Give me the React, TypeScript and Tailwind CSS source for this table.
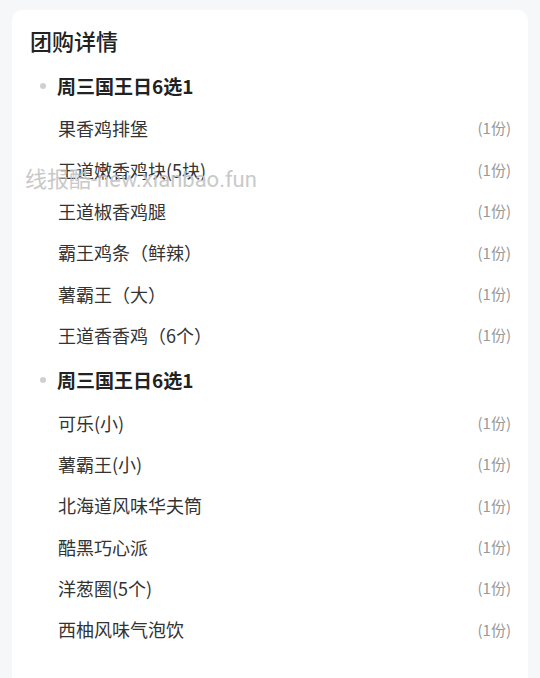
import React from "react";

const groups = [
  {
    title: "周三国王日6选1",
    items: ["果香鸡排堡", "王道嫩香鸡块(5块)", "王道椒香鸡腿", "霸王鸡条（鲜辣）", "薯霸王（大）", "王道香香鸡（6个）"],
  },
  {
    title: "周三国王日6选1",
    items: ["可乐(小)", "薯霸王(小)", "北海道风味华夫筒", "酷黑巧心派", "洋葱圈(5个)", "西柚风味气泡饮"],
  },
];

export default function App() {
  return (
    <div
      className="relative h-[678px] w-[540px] overflow-hidden bg-[#f6f7f9] px-3 pt-[10px]"
      style={{ fontFamily: '"Noto Sans CJK SC", "Noto Sans", sans-serif' }}
    >
      <div className="h-[700px] rounded-[10px] bg-white pl-[18px] pr-[17px] pt-[14px]">
        <div className="text-[22px] font-medium leading-[32px] text-[#222]">团购详情</div>
        {groups.map((g, gi) => (
          <div key={gi} className={gi === 0 ? "mt-[8px]" : "mt-[2px]"}>
            <div className="flex h-[44px] items-center">
              <span className="ml-[10px] mr-[11px] h-[6px] w-[6px] rounded-full bg-[#d0d0d0]" />
              <span className="text-[19px] font-bold text-[#222]">{g.title}</span>
            </div>
            {g.items.map((it, ii) => (
              <div key={ii} className="flex h-[41.4px] items-center justify-between pl-[28px]">
                <span className="text-[18px] text-[#333]">{it}</span>
                <span className="text-[15px] text-[#999]">(1份)</span>
              </div>
            ))}
          </div>
        ))}
      </div>
      <div
        className="pointer-events-none absolute left-[25px] top-[163px] text-[22px] text-[#c4c4c4] opacity-90"
        style={{ fontFamily: 'Roboto, "Noto Sans CJK SC", sans-serif' }}
      >
        线报酷-new.xianbao.fun
      </div>
    </div>
  );
}
